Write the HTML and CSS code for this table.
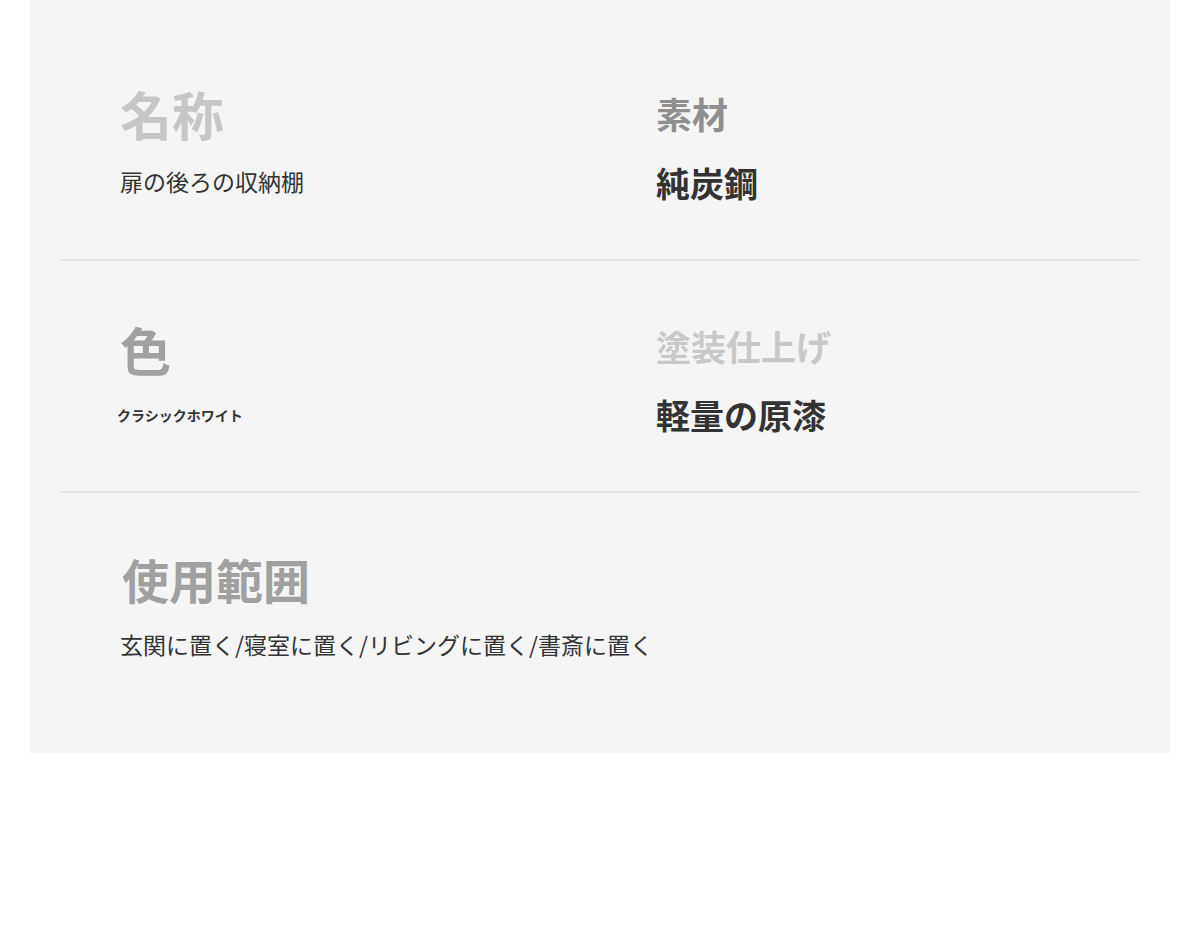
FILE: index.html
```html
<!DOCTYPE html>
<html lang="ja">
<head>
<meta charset="utf-8">
<title>仕様</title>
<link rel="stylesheet" href="styles.css">
</head>
<body>
<div class="panel">
  <div class="row row1">
    <div class="cell left">
      <div class="label l-name">名称</div>
      <div class="value v-name">扉の後ろの収納棚</div>
    </div>
    <div class="cell right">
      <div class="label l-mat">素材</div>
      <div class="value v-mat">純炭鋼</div>
    </div>
  </div>
  <div class="row row2">
    <div class="cell left">
      <div class="label l-color">色</div>
      <div class="value v-color">クラシックホワイト</div>
    </div>
    <div class="cell right">
      <div class="label l-finish">塗装仕上げ</div>
      <div class="value v-finish">軽量の原漆</div>
    </div>
  </div>
  <div class="row row3">
    <div class="cell left">
      <div class="label l-use">使用範囲</div>
      <div class="value v-use">玄関に置く/寝室に置く/リビングに置く/書斎に置く</div>
    </div>
  </div>
</div>
</body>
</html>
```

FILE: styles.css
```css
html, body {
  margin: 0;
  padding: 0;
  background: #ffffff;
}

body {
  font-family: "Noto Sans CJK JP", "Noto Sans", sans-serif;
  color: #333333;
}

.panel {
  margin: 0 30px;
  background: #f5f5f5;
  padding: 0 30px;
  height: 753px;
  box-sizing: border-box;
}

.row {
  display: grid;
  grid-template-columns: 1fr 1fr;
  align-items: start;
  border-bottom: 2px solid #e5e5e5;
}

.row1 { height: 261px; box-sizing: border-box; }
.row2 { height: 232px; box-sizing: border-box; }
.row3 { border-bottom: none; grid-template-columns: 1fr; }

.cell {
  display: flex;
  flex-direction: column;
  align-items: flex-start;
}

.left { padding-left: 60px; }
.right { padding-left: 56px; }

.label, .value {
  line-height: 1;
  white-space: nowrap;
}

.label { font-weight: 700; }
.value { color: #333333; }

/* row 1 */
.row1 .left { padding-top: 88px; }
.l-name { font-size: 52px; color: #c6c6c6; }
.v-name { font-size: 23px; margin-top: 30px; font-weight: 400; }

.row1 .right { padding-top: 95px; }
.l-mat { font-size: 36px; color: #8f8f8f; }
.v-mat { font-size: 34px; margin-top: 35px; font-weight: 700; }

/* row 2 */
.row2 .left { padding-top: 63px; }
.l-color { font-size: 51px; color: #a0a0a0; }
.v-color { font-size: 14px; margin-top: 33px; margin-left: -3px; font-weight: 700; }

.row2 .right { padding-top: 67px; }
.l-finish { font-size: 35px; color: #c8c8c8; }
.v-finish { font-size: 34px; margin-top: 35px; font-weight: 700; }

/* row 3 */
.row3 .left { padding-top: 62px; }
.l-use { font-size: 47px; color: #a0a0a0; margin-left: 2px; }
.v-use { font-size: 23px; margin-top: 31px; font-weight: 400; }
```
